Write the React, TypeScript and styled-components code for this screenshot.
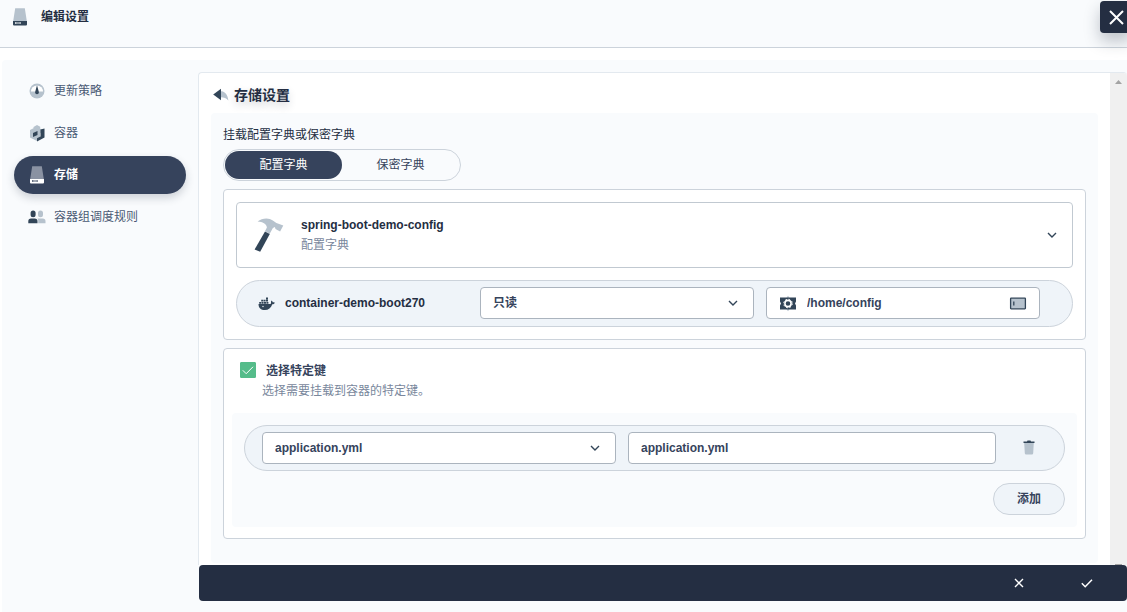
import React, { useState } from 'react';
import styled, { createGlobalStyle, css } from 'styled-components';

const color = {
  ink: '#242e42',
  slate: '#36435c',
  nav: '#4a5974',
  muted: '#79879c',
  line: '#ccd3db',
  lineSoft: '#e3e9ef',
  lineField: '#abb4be',
  bg: '#f9fbfd',
  row: '#eff4f9',
  green: '#55bc8a',
  iconDark: '#324558',
  iconLight: '#b6c2cd',
};

const GlobalStyle = createGlobalStyle`
  *, *::before, *::after { box-sizing: border-box; }
  body {
    margin: 0;
    background: #fff;
    color: ${color.ink};
    font-family: "Liberation Sans", "Noto Sans CJK SC", sans-serif;
    font-size: 12px;
    line-height: 20px;
  }
  h1, h2, p, ul { margin: 0; padding: 0; }
  button, input, select { font: inherit; color: inherit; margin: 0; }
  button { cursor: pointer; }
  svg { display: block; flex: none; }
`;

const Page = styled.div`
  display: flex;
  flex-direction: column;
  min-height: 100vh;
  overflow-x: clip;
`;

const Header = styled.header`
  display: flex;
  align-items: flex-start;
  justify-content: space-between;
  height: 48px;
  padding: 1px 0 0 10px;
  background: ${color.bg};
  border-bottom: 1px solid ${color.line};
`;

const HeaderTitle = styled.div`
  display: flex;
  align-items: center;
  gap: 11px;
  height: 32px;
`;

const Heading = styled.h1`
  font-size: 12px;
  line-height: 20px;
  font-weight: 700;
`;

const CloseButton = styled.button`
  display: flex;
  align-items: center;
  justify-content: center;
  width: 32px;
  height: 32px;
  margin-right: -5px;
  padding: 0;
  border: 0;
  border-radius: 4px;
  background: ${color.ink};
  color: #fff;
  box-shadow: 0 8px 16px 0 rgba(36, 46, 66, 0.28);
`;

const Body = styled.div`
  display: flex;
  flex: 1;
  margin: 12px 0 0 2px;
  padding: 12px 0 11px 12px;
  background: ${color.bg};
  border-radius: 4px 0 0 0;
`;

const Nav = styled.nav`
  flex: none;
  width: 172px;
  margin-right: 12px;
`;

const NavList = styled.ul`
  display: flex;
  flex-direction: column;
  gap: 4px;
  list-style: none;
`;

const NavLink = styled.a<{ $active?: boolean }>`
  display: flex;
  align-items: center;
  gap: 7px;
  height: 38px;
  padding: 0 13px;
  border-radius: 19px;
  color: ${color.nav};
  text-decoration: none;
  ${(p) =>
    p.$active &&
    css`
      background: ${color.slate};
      color: #fff;
      font-weight: 700;
      box-shadow: 0 4px 8px 0 rgba(36, 46, 66, 0.2);
    `}
`;

const Panel = styled.main`
  display: flex;
  flex: 1;
  flex-direction: column;
  min-width: 0;
`;

const PanelView = styled.div`
  display: flex;
  flex: 1;
  background: #fff;
  border: 1px solid ${color.lineSoft};
  border-width: 1px 0 0 1px;
  border-radius: 4px 4px 0 0;
  overflow: hidden;
`;

const PanelContent = styled.div`
  flex: 1;
  min-width: 0;
  padding: 12px 12px 2px;
`;

const ScrollTrack = styled.div`
  display: flex;
  flex-direction: column;
  align-items: center;
  justify-content: space-between;
  flex: none;
  width: 17px;
  padding-top: 7px;
  background: #f0f0f0;
`;

const ScrollThumb = styled.span`
  width: 7px;
  height: 1px;
  background: #a3a3a3;
`;

const TitleRow = styled.div`
  display: flex;
  align-items: center;
  gap: 4px;
  height: 20px;
  margin-bottom: 8px;
  padding-left: 1px;
`;

const BackButton = styled.button`
  display: flex;
  padding: 0;
  border: 0;
  background: none;
`;

const Title = styled.h2`
  font-size: 14px;
  line-height: 20px;
  font-weight: 700;
  text-shadow: 0 4px 8px rgba(36, 46, 66, 0.2);
`;

const FormArea = styled.div`
  display: flex;
  flex-direction: column;
  gap: 8px;
  padding: 12px 12px 24px;
  background: ${color.bg};
  border-radius: 4px;
`;

const TypeGroup = styled.div`
  display: flex;
  flex-direction: column;
  gap: 4px;
`;

const Tabs = styled.div`
  display: flex;
  align-self: flex-start;
  padding: 1px;
  border: 1px solid ${color.line};
  border-radius: 16px;
`;

const Tab = styled.button<{ $active?: boolean }>`
  width: 117px;
  height: 28px;
  padding: 0;
  border: 0;
  border-radius: 14px;
  line-height: 20px;
  background: ${(p) => (p.$active ? color.slate : 'transparent')};
  color: ${(p) => (p.$active ? '#fff' : color.slate)};
`;

const Card = styled.section`
  display: flex;
  flex-direction: column;
  gap: 12px;
  padding: 12px;
  background: #fff;
  border: 1px solid ${color.line};
  border-radius: 4px;
`;

const KeysCard = styled(Card)`
  padding: 12px 8px 11px;
`;

const ConfigPicker = styled.button`
  display: flex;
  align-items: center;
  gap: 12px;
  height: 66px;
  padding: 0 12px;
  background: #fff;
  border: 1px solid #c1c9d1;
  border-radius: 4px;
  text-align: left;
`;

const PickerText = styled.span`
  display: flex;
  flex: 1;
  flex-direction: column;
`;

const Strong = styled.span`
  font-weight: 700;
`;

const Muted = styled.span`
  color: ${color.muted};
`;

const MountRow = styled.div`
  display: grid;
  grid-template-columns: 210fr 274fr 274fr;
  gap: 12px;
  padding: 6px 32px 7px 21px;
  background: ${color.row};
  border: 1px solid ${color.line};
  border-radius: 24px;
`;

const ContainerName = styled.div`
  display: flex;
  align-items: center;
  gap: 10px;
  min-width: 0;
`;

const KeyRow = styled.div`
  display: grid;
  grid-template-columns: 354fr 368fr 42px;
  gap: 12px;
  padding: 6px 14px 6px 17px;
  background: ${color.row};
  border: 1px solid ${color.line};
  border-radius: 23px;
`;

const Field = styled.div<{ $icons?: boolean }>`
  display: flex;
  align-items: center;
  gap: 10px;
  min-width: 0;
  height: 32px;
  padding: ${(p) => (p.$icons ? '0 12px' : '0')};
  background: #fff;
  border: 1px solid ${color.lineField};
  border-radius: 4px;
`;

const TextInput = styled.input<{ $inset?: boolean }>`
  flex: 1;
  min-width: 0;
  height: 30px;
  padding: ${(p) => (p.$inset ? '0 12px' : '0')};
  border: 0;
  outline: 0;
  background: transparent;
  color: ${color.slate};
  font-weight: 700;
`;

const SelectBox = styled.div`
  display: grid;
  align-items: center;
  min-width: 0;
  height: 32px;
  background: #fff;
  border: 1px solid ${color.lineField};
  border-radius: 4px;

  & > * { grid-area: 1 / 1; }
  & > svg {
    justify-self: end;
    margin-right: 12px;
    pointer-events: none;
  }
`;

const Select = styled.select`
  appearance: none;
  width: 100%;
  height: 30px;
  padding: 0 32px 0 12px;
  border: 0;
  outline: 0;
  background: transparent;
  color: ${color.slate};
  font-weight: 700;
`;

const CheckBlock = styled.div`
  display: flex;
  flex-direction: column;
  padding: 0 8px;
`;

const CheckLabel = styled.label`
  display: flex;
  align-items: flex-start;
  gap: 10px;
  height: 20px;
  color: ${color.slate};
  font-weight: 700;
`;

const CheckMark = styled.span`
  display: grid;
  padding-top: 1px;
  & > * { grid-area: 1 / 1; }
  & > svg { pointer-events: none; }
`;

const CheckInput = styled.input`
  appearance: none;
  width: 16px;
  height: 16px;
  border: 1px solid ${color.lineField};
  border-radius: 1px;
  background: #fff;
  &:checked {
    border-color: ${color.green};
    background: ${color.green};
  }
`;

const CheckHint = styled.p`
  padding-left: 22px;
  color: ${color.muted};
`;

const KeysArea = styled.div`
  display: flex;
  flex-direction: column;
  gap: 12px;
  padding: 12px;
  background: ${color.bg};
  border-radius: 4px;
`;

const IconButton = styled.button`
  display: flex;
  align-items: center;
  justify-content: center;
  padding: 0;
  border: 0;
  background: none;
`;

const AddButton = styled.button`
  align-self: flex-end;
  width: 72px;
  height: 32px;
  padding: 0;
  border: 1px solid ${color.line};
  border-radius: 16px;
  background: ${color.row};
  color: ${color.slate};
  font-weight: 700;
`;

const Footer = styled.footer`
  display: flex;
  justify-content: flex-end;
  gap: 12px;
  height: 36px;
  margin-left: 1px;
  padding: 0 12px;
  background: ${color.ink};
  border-radius: 4px;
  color: #fff;
`;

const FooterButton = styled.button`
  display: flex;
  align-items: center;
  justify-content: center;
  width: 56px;
  padding: 0;
  border: 0;
  background: none;
`;

const StorageIcon = ({ light }: { light?: boolean }) => (
  <svg width="20" height="20" viewBox="0 0 20 20" aria-hidden="true">
    <path d="M5.2 1.2h9.6l2 12.8H3.2z" fill={light ? '#8a92a2' : color.iconLight} />
    <path
      fillRule="evenodd"
      d="M3 14h14v3.400a1 1 0 0 1-1 1H4a1 1 0 0 1-1-1zM5 15.200v1.600h1.700v-1.600zM7.400 15.200v1.600h1.200v-1.600zM9.300 15.200v1.600h1.500v-1.600z"
      fill={light ? '#fff' : color.iconDark}
    />
  </svg>
);

const GaugeIcon = () => (
  <svg width="20" height="20" viewBox="0 0 20 20" aria-hidden="true">
    <circle cx="10" cy="10" r="7.500" fill={color.iconLight} />
    <path d="M3.900 10.500a6.100 6.100 0 0 1 12.200 0z" fill="#fff" />
    <path d="M10 4.200l1.800 6.500a1.900 1.900 0 1 1-3.600 0z" fill={color.iconDark} />
  </svg>
);

const BoxIcon = () => (
  <svg width="20" height="20" viewBox="0 0 20 20" aria-hidden="true">
    <path d="M6.500 4L10 2l3.200 1.800v2L17.500 8 13 10.300v5.200L10 18l-7-3.400V7l3.500-1.800z" fill={color.iconLight} />
    <path d="M6 10l4.500-2v4l-4.500 2z" fill={color.iconDark} />
    <path d="M13.500 6.500l4-1v9l-7.500 3.900v-3.200l3.500-1.600z" fill={color.iconDark} />
  </svg>
);

const UsersIcon = () => (
  <svg width="20" height="20" viewBox="0 0 20 20" aria-hidden="true">
    <path d="M11 6a2.500 2.500 0 0 1 5 0v1.700a2.500 2.500 0 0 1-5 0zM11.200 16.300v-2.600c0-1-.3-1.700-.7-2.200h5.200a2.800 2.800 0 0 1 2.800 2.800v2z" fill={color.iconLight} />
    <path d="M3.600 6a2.500 2.500 0 0 1 5 0v1.700a2.500 2.500 0 0 1-5 0zM1.300 16.300v-2a2.800 2.800 0 0 1 2.800-2.800h3.600a2.800 2.800 0 0 1 2.800 2.800v2z" fill={color.iconDark} />
  </svg>
);

const BackIcon = () => (
  <svg width="18" height="16" viewBox="0 0 18 16" aria-hidden="true">
    <path d="M8.500 4.200c4.200 0 7 2.600 7.900 9.300-2-2.600-4.200-3.300-7.900-3.300z" fill={color.iconLight} />
    <path d="M9 1.800v11.400L1.200 7.500z" fill={color.iconDark} />
  </svg>
);

const HammerIcon = () => (
  <svg width="40" height="40" viewBox="0 0 40 40" aria-hidden="true">
    <path d="M8.600 6.600C13 3 19.800 2.400 23.800 5.600l3.600 2.300 6.900 2.600-3.200 6-4.600-2.400-.6-2.200-2 1.200-3.200 5.600-4.600-2.600 1.800-3.700C17.400 9 13.600 7 8.600 6.600z" fill={color.iconLight} />
    <path d="M16 16.400l4.800 2.700-9.600 17.600-5.600-2.200z" fill={color.iconDark} />
  </svg>
);

const DockerIcon = () => (
  <svg width="17" height="20" viewBox="0 0 17 20" aria-hidden="true">
    <path d="M8 4.500h2v2H8zM3.200 6.800h2v1.800h-2zM5.600 6.800h2v1.800h-2zM8 6.800h2v1.800H8zM1.200 8.900h2v1.800h-2zM3.600 8.900h2v1.800h-2zM6 8.900h2v1.800H6zM8.400 8.900h2v1.800h-2z" fill={color.iconDark} />
    <path
      fillRule="evenodd"
      d="M.5 11h11.300c.9 0 1.300-.5 1.200-1.300-.1-.8 0-1.500.5-2.100.8.500 1.100 1.100 1.200 1.700.8-.1 1.500 0 2.100.4-.5 1-1.300 1.500-2.500 1.500-1.300 3.800-3.800 5.800-7.400 5.800C2.800 17 .6 15 .5 11zM5 12.800a.7.700 0 1 0 0 1.400.7.700 0 0 0 0-1.400z"
      fill={color.iconDark}
    />
  </svg>
);

const MountIcon = () => (
  <svg width="18" height="20" viewBox="0 0 18 20" aria-hidden="true">
    <path d="M9 2.800l2 2.700H7zM9 18.200l2-2.700H7z" fill={color.iconLight} />
    <path d="M1 4.500h16v4l-1 2 1 2v4H1v-4l1-2-1-2z" fill={color.iconDark} />
    <circle cx="9" cy="10.500" r="3.100" fill="none" stroke="#fff" strokeWidth="1.600" />
    <circle cx="9" cy="10.500" r="4.300" fill="none" stroke="#fff" strokeWidth="1" strokeDasharray="1.700 1.680" />
  </svg>
);

const CardIcon = () => (
  <svg width="18" height="20" viewBox="0 0 18 20" aria-hidden="true">
    <rect x="1.600" y="5.200" width="14.800" height="10.600" rx="0.500" fill={color.iconLight} stroke={color.iconDark} strokeWidth="1.300" />
    <path d="M4.800 8.500v4" stroke={color.iconDark} strokeWidth="1.300" />
  </svg>
);

const ChevronIcon = () => (
  <svg width="16" height="16" viewBox="0 0 16 16" aria-hidden="true">
    <path d="M4 6l4 4 4-4" fill="none" stroke={color.iconDark} strokeWidth="1.400" />
  </svg>
);

const TrashIcon = () => (
  <svg width="16" height="20" viewBox="0 0 16 20" aria-hidden="true">
    <path d="M3.200 4.800h9.600l-.6 10.500a1.300 1.300 0 0 1-1.300 1.200H5.100a1.300 1.300 0 0 1-1.300-1.200z" fill={color.iconLight} />
    <path d="M2.500 3.500H6l.5-1h3l.5 1h3.500v1.500h-11z" fill={color.iconDark} />
  </svg>
);

const CrossIcon = ({ size, weight }: { size: number; weight: number }) => (
  <svg width={size} height={size} viewBox={`0 0 ${size} ${size}`} aria-hidden="true">
    <path d={`M1 1L${size - 1} ${size - 1}M${size - 1} 1L1 ${size - 1}`} stroke="#fff" strokeWidth={weight} />
  </svg>
);

const TickIcon = ({ weight }: { weight: number }) => (
  <svg width="16" height="16" viewBox="0 0 16 16" aria-hidden="true">
    <path d="M2.800 8.300l3.400 3.400 6.800-6.900" fill="none" stroke="#fff" strokeWidth={weight} />
  </svg>
);

const ArrowUpIcon = () => (
  <svg width="7" height="4" viewBox="0 0 7 4" aria-hidden="true">
    <path d="M0 4L3.500 0 7 4z" fill="#a3a3a3" />
  </svg>
);

const navItems = [
  { id: 'strategy', label: '更新策略', icon: <GaugeIcon /> },
  { id: 'containers', label: '容器', icon: <BoxIcon /> },
  { id: 'storage', label: '存储', icon: <StorageIcon light /> },
  { id: 'scheduling', label: '容器组调度规则', icon: <UsersIcon /> },
];

const tabs = ['配置字典', '保密字典'];

export default function App() {
  const [tab, setTab] = useState(0);
  const [specific, setSpecific] = useState(true);

  return (
    <>
      <GlobalStyle />
      <Page>
        <Header>
          <HeaderTitle>
            <StorageIcon />
            <Heading>编辑设置</Heading>
          </HeaderTitle>
          <CloseButton type="button" aria-label="关闭">
            <CrossIcon size={15} weight={2} />
          </CloseButton>
        </Header>
        <Body>
          <Nav>
            <NavList>
              {navItems.map((item) => (
                <li key={item.id}>
                  <NavLink
                    href={`#${item.id}`}
                    $active={item.id === 'storage'}
                    aria-current={item.id === 'storage' ? 'page' : undefined}
                  >
                    {item.icon}
                    {item.label}
                  </NavLink>
                </li>
              ))}
            </NavList>
          </Nav>
          <Panel>
            <PanelView>
              <PanelContent>
                <TitleRow>
                  <BackButton type="button" aria-label="返回">
                    <BackIcon />
                  </BackButton>
                  <Title>存储设置</Title>
                </TitleRow>
                <FormArea>
                  <TypeGroup>
                    <p>挂载配置字典或保密字典</p>
                    <Tabs role="tablist">
                      {tabs.map((name, i) => (
                        <Tab
                          key={name}
                          type="button"
                          role="tab"
                          aria-selected={tab === i}
                          $active={tab === i}
                          onClick={() => setTab(i)}
                        >
                          {name}
                        </Tab>
                      ))}
                    </Tabs>
                  </TypeGroup>
                  <Card>
                    <ConfigPicker type="button" aria-haspopup="listbox">
                      <HammerIcon />
                      <PickerText>
                        <Strong>spring-boot-demo-config</Strong>
                        <Muted>配置字典</Muted>
                      </PickerText>
                      <ChevronIcon />
                    </ConfigPicker>
                    <MountRow>
                      <ContainerName>
                        <DockerIcon />
                        <Strong>container-demo-boot270</Strong>
                      </ContainerName>
                      <SelectBox>
                        <Select aria-label="访问模式" defaultValue="ro">
                          <option value="ro">只读</option>
                        </Select>
                        <ChevronIcon />
                      </SelectBox>
                      <Field $icons>
                        <MountIcon />
                        <TextInput aria-label="挂载路径" defaultValue="/home/config" />
                        <CardIcon />
                      </Field>
                    </MountRow>
                  </Card>
                  <KeysCard>
                    <CheckBlock>
                      <CheckLabel>
                        <CheckMark>
                          <CheckInput
                            type="checkbox"
                            checked={specific}
                            onChange={(e) => setSpecific(e.target.checked)}
                          />
                          <TickIcon weight={1} />
                        </CheckMark>
                        选择特定键
                      </CheckLabel>
                      <CheckHint>选择需要挂载到容器的特定键。</CheckHint>
                    </CheckBlock>
                    <KeysArea>
                      <KeyRow>
                        <SelectBox>
                          <Select aria-label="键" defaultValue="application.yml">
                            <option>application.yml</option>
                          </Select>
                          <ChevronIcon />
                        </SelectBox>
                        <Field>
                          <TextInput $inset aria-label="路径" defaultValue="application.yml" />
                        </Field>
                        <IconButton type="button" aria-label="删除">
                          <TrashIcon />
                        </IconButton>
                      </KeyRow>
                      <AddButton type="button">添加</AddButton>
                    </KeysArea>
                  </KeysCard>
                </FormArea>
              </PanelContent>
              <ScrollTrack aria-hidden="true">
                <ArrowUpIcon />
                <ScrollThumb />
              </ScrollTrack>
            </PanelView>
            <Footer>
              <FooterButton type="button" aria-label="取消">
                <CrossIcon size={10} weight={1.4} />
              </FooterButton>
              <FooterButton type="button" aria-label="确定">
                <TickIcon weight={1.5} />
              </FooterButton>
            </Footer>
          </Panel>
        </Body>
      </Page>
    </>
  );
}
